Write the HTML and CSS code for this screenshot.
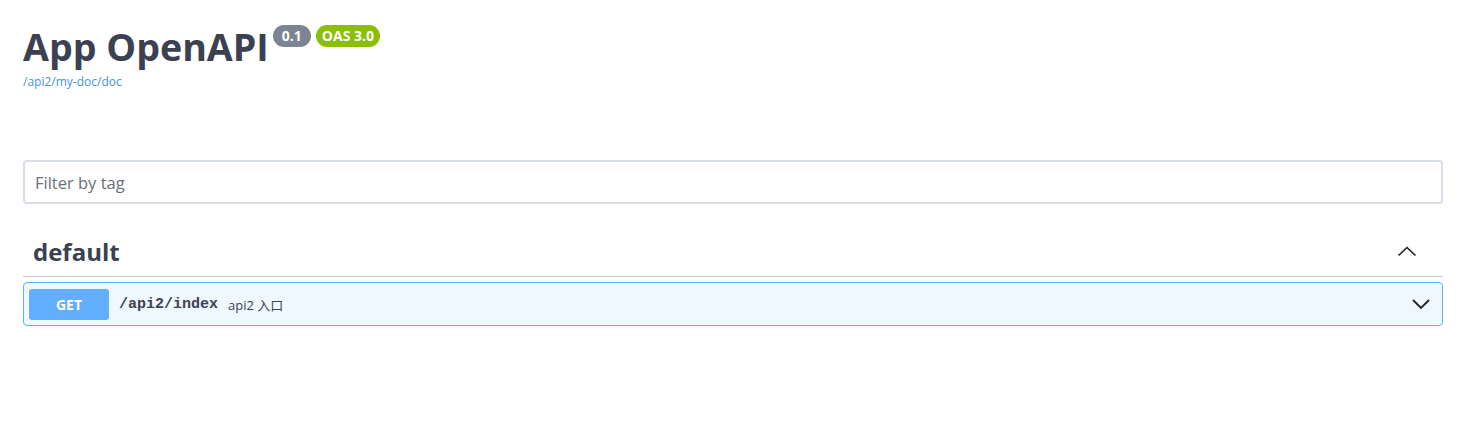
FILE: index.html
```
<!DOCTYPE html>
<html lang="en">
<head>
<meta charset="utf-8">
<title>App OpenAPI</title>
<link rel="stylesheet" href="styles.css">
</head>
<body>
<div class="wrapper">
  <div class="info">
    <h2 class="title">App OpenAPI<span class="badges"><small class="badge version">0.1</small><small class="badge oas">OAS 3.0</small></span></h2>
    <a class="link" href="#">/api2/my-doc/doc</a>
  </div>
  <div class="filter">
    <input class="filter-input" type="text" placeholder="Filter by tag">
  </div>
  <div class="tag-section">
    <h3 class="tag">
      <span class="tag-name">default</span>
      <svg class="arrow" width="20" height="20" viewBox="0 0 20 20"><polyline points="1.5,13.5 10,5.5 18.5,13.5" fill="none" stroke="#222" stroke-width="1.6"/></svg>
    </h3>
    <div class="opblock">
      <div class="summary">
        <span class="method">GET</span>
        <span class="path">/api2/index</span>
        <span class="desc">api2 入口</span>
        <svg class="chevron" width="20" height="20" viewBox="0 0 20 20"><polyline points="2,6 10,14 18,6" fill="none" stroke="#222" stroke-width="1.8"/></svg>
      </div>
    </div>
  </div>
</div>
</body>
</html>
```
FILE: styles.css
```
* { box-sizing: border-box; }
body {
  margin: 0;
  background: #fff;
  font-family: "Open Sans", "Noto Sans CJK SC", sans-serif;
  color: #3b4151;
}
.wrapper {
  max-width: 1460px;
  margin: 0 auto;
  padding: 0 20px;
}
.info {
  padding-top: 23px;
}
.title {
  margin: 0;
  font-size: 37.6px;
  font-weight: 700;
  line-height: 48px;
  color: #3b4151;
  display: flex;
  align-items: flex-start;
}
.badges {
  display: inline-flex;
  gap: 5px;
  margin-left: 4px;
  margin-top: 2px;
}
.badge {
  font-size: 14px;
  font-weight: 700;
  line-height: 18px;
  color: #fff;
  padding: 2px 9px;
  border-radius: 57px;
}
.version { background: #7d8492; }
.oas { background: #89bf04; padding: 2px 6px; }
.link {
  display: block;
  margin-top: 3px;
  font-size: 12px;
  line-height: 16px;
  color: #4990e2;
  text-decoration: none;
}
.filter {
  margin-top: 70px;
}
.filter-input {
  display: block;
  width: 100%;
  height: 44px;
  border: 2px solid #d8dde7;
  border-radius: 4px;
  padding: 0 10px;
  font-family: "Open Sans", sans-serif;
  font-size: 16.5px;
  color: #3b4151;
  background: #fff;
  outline: none;
}
.filter-input::placeholder { color: #6b6f78; }
.tag-section {
  margin-top: 24px;
}
.tag {
  margin: 0 0 5px;
  display: flex;
  align-items: center;
  justify-content: space-between;
  padding: 10px 26px 10px 10px;
  border-bottom: 1px solid rgba(59,65,81,.3);
  font-size: 24px;
  font-weight: 700;
  line-height: 28px;
}
.opblock {
  border: 1px solid #61affe;
  background: #eff7ff;
  border-radius: 4px;
}
.summary {
  display: flex;
  align-items: center;
  padding: 5px;
  height: 42px;
}
.method {
  width: 80px;
  height: 31px;
  background: #61affe;
  color: #fff;
  border-radius: 3px;
  font-size: 14px;
  font-weight: 700;
  display: flex;
  align-items: center;
  justify-content: center;
}
.path {
  margin-left: 10px;
  font-family: "Liberation Mono", monospace;
  font-size: 15px;
  font-weight: 700;
  color: #3b4151;
}
.desc {
  margin-left: 10px;
  font-size: 13px;
  color: #3b4151;
}
.chevron {
  margin-left: auto;
  margin-right: 6px;
}
```
